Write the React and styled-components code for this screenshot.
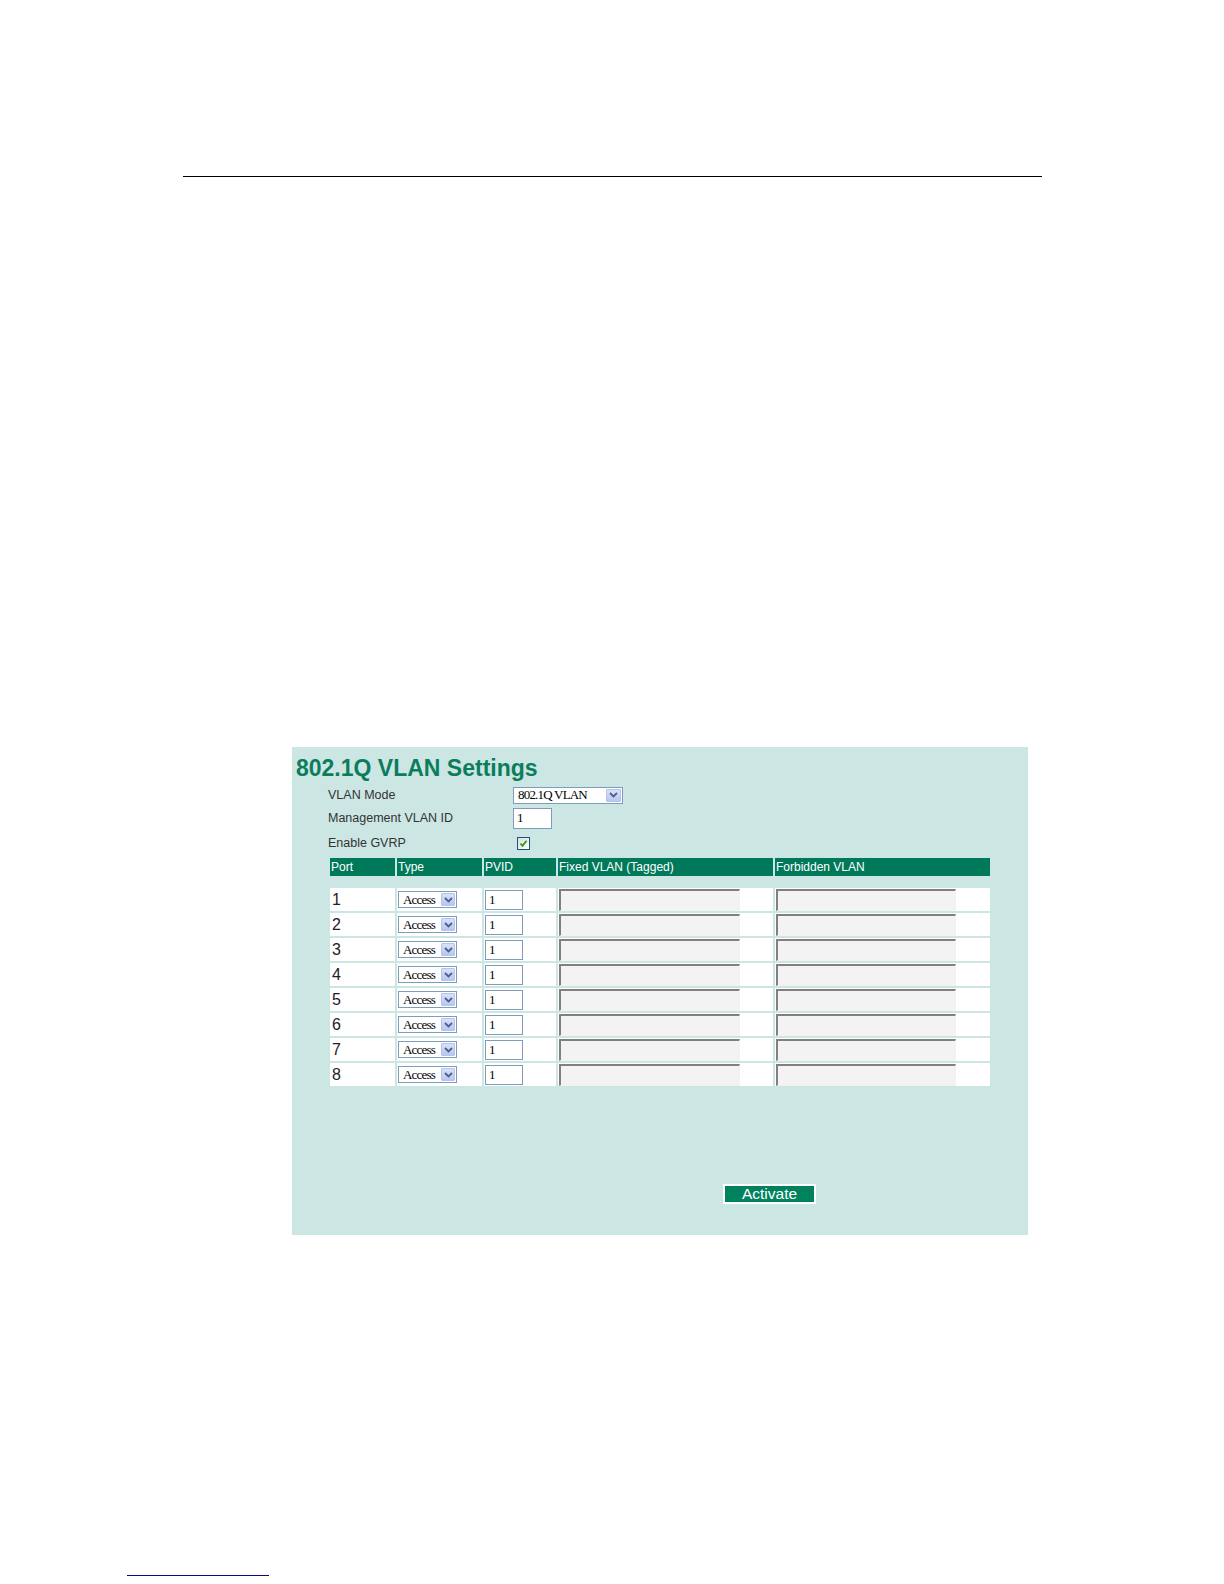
import React from "react";
import styled, { createGlobalStyle } from "styled-components";

const GlobalStyle = createGlobalStyle`
  body {
    margin: 0;
    background: #ffffff;
    font-family: "Liberation Sans", Arial, sans-serif;
  }
`;

const Page = styled.div`
  width: 1224px;
  min-height: 1584px;
  overflow: hidden;
`;

const Rule = styled.div`
  height: 1px;
  background: ${({ color }) => color || "#000"};
  width: ${({ width }) => width}px;
  margin-left: ${({ left }) => left}px;
  margin-top: ${({ top }) => top}px;
`;

const Panel = styled.div`
  box-sizing: border-box;
  width: 736px;
  height: 488px;
  margin-left: 292px;
  margin-top: 570px;
  background: #cce6e4;
  padding-top: 8px;
`;

const Title = styled.h1`
  margin: 0;
  padding-left: 4px;
  font-family: "Liberation Sans", Arial, sans-serif;
  font-size: 23px;
  line-height: 26px;
  font-weight: bold;
  color: #0b7d5c;
`;

const Form = styled.div`
  margin-top: 4px;
  margin-left: 36px;
  display: flex;
  flex-direction: column;
`;

const FormRow = styled.div`
  display: flex;
  align-items: center;
  height: ${({ h }) => h}px;
`;

const Label = styled.div`
  width: 185px;
  font-size: 12.5px;
  color: #333;
`;

const SelectBox = styled.div`
  box-sizing: border-box;
  display: flex;
  align-items: center;
  width: ${({ w }) => w}px;
  height: ${({ h }) => h}px;
  margin-left: ${({ ml }) => ml || 0}px;
  border: 1px solid #7f9db9;
  background: #fff;
  padding: 0 1px 0 4px;
`;

const SelectText = styled.span`
  flex: 1;
  font-family: "Liberation Serif", "Times New Roman", serif;
  font-size: 13px;
  letter-spacing: -0.8px;
  color: #000;
  white-space: nowrap;
`;

const ArrowBtn = styled.span`
  box-sizing: border-box;
  display: flex;
  align-items: center;
  justify-content: center;
  width: ${({ w }) => w}px;
  height: calc(100% - 2px);
  background: linear-gradient(#d9e1f8, #b8c7f0);
  border: 1px solid #b3c3ee;
  border-radius: 1px;
`;

const TextInput = styled.input`
  box-sizing: border-box;
  width: ${({ w }) => w}px;
  height: ${({ h }) => h}px;
  margin: 0 0 0 ${({ ml }) => ml || 0}px;
  padding: 0 0 0 3px;
  border: 1px solid #7f9db9;
  background: #fff;
  font-family: "Liberation Serif", "Times New Roman", serif;
  font-size: 13px;
  color: #000;
  outline: none;
`;

const DisabledInput = styled.input`
  box-sizing: border-box;
  width: ${({ w }) => w}px;
  height: 22px;
  margin: 0 0 0 1px;
  padding: 0;
  border-style: solid;
  border-width: 2px 1px 1px 2px;
  border-color: #808080 #f2f2f2 #f2f2f2 #808080;
  background: #f3f3f3;
  outline: none;
`;

const Check = styled.span`
  box-sizing: border-box;
  display: flex;
  align-items: center;
  justify-content: center;
  width: 13px;
  height: 13px;
  margin-left: 4px;
  border: 1px solid #1c5180;
  background: linear-gradient(135deg, #dcdcd7, #ffffff);
`;

const Table = styled.div`
  margin-top: 3px;
  margin-left: 38px;
  display: flex;
  flex-direction: column;
  row-gap: 2px;
`;

const Row = styled.div`
  display: grid;
  grid-template-columns: 65px 85px 72px 215px 215px;
  column-gap: 2px;
  height: ${({ head }) => (head ? 18 : 23)}px;
  margin-bottom: ${({ head }) => (head ? 10 : 0)}px;
`;

const HeadCell = styled.div`
  background: #00795a;
  color: #fff;
  font-size: 12px;
  line-height: 18px;
  padding-left: 1px;
  white-space: nowrap;
`;

const Cell = styled.div`
  display: flex;
  align-items: center;
  background: #fff;
  padding-left: ${({ pl }) => pl || 0}px;
  font-size: 16px;
  color: #222;
`;

const ActivateButton = styled.button`
  box-sizing: border-box;
  display: block;
  width: 93px;
  height: 20px;
  margin: 98px 0 0 431px;
  padding: 0;
  border: 2px solid #fff;
  background: #00825f;
  color: #fff;
  font-family: "Liberation Sans", Arial, sans-serif;
  font-size: 15.5px;
  line-height: 16px;
  cursor: pointer;
`;

const Chevron = () => (
  <svg width="9" height="6" viewBox="0 0 9 6">
    <path d="M1 1 L4.5 4.5 L8 1" fill="none" stroke="#4d5f8a" strokeWidth="1.8" />
  </svg>
);

const ports = [1, 2, 3, 4, 5, 6, 7, 8];

export default function App() {
  return (
    <Page>
      <GlobalStyle />
      <Rule top={176} left={183} width={859} />
      <Panel>
        <Title>802.1Q VLAN Settings</Title>
        <Form>
          <FormRow h={20}>
            <Label>VLAN Mode</Label>
            <SelectBox w={110} h={17}>
              <SelectText>802.1Q VLAN</SelectText>
              <ArrowBtn w={15}>
                <Chevron />
              </ArrowBtn>
            </SelectBox>
          </FormRow>
          <FormRow h={26}>
            <Label>Management VLAN ID</Label>
            <TextInput w={39} h={21} defaultValue="1" />
          </FormRow>
          <FormRow h={24}>
            <Label>Enable GVRP</Label>
            <Check>
              <svg width="9" height="9" viewBox="0 0 9 9">
                <path d="M1.5 4.5 L3.5 6.8 L7.6 1.8" fill="none" stroke="#21a121" strokeWidth="1.8" />
              </svg>
            </Check>
          </FormRow>
        </Form>
        <Table>
          <Row head>
            <HeadCell>Port</HeadCell>
            <HeadCell>Type</HeadCell>
            <HeadCell>PVID</HeadCell>
            <HeadCell>Fixed VLAN (Tagged)</HeadCell>
            <HeadCell>Forbidden VLAN</HeadCell>
          </Row>
          {ports.map((p) => (
            <Row key={p}>
              <Cell pl={2}>{p}</Cell>
              <Cell>
                <SelectBox w={59} h={17} ml={1}>
                  <SelectText>Access</SelectText>
                  <ArrowBtn w={14}>
                    <Chevron />
                  </ArrowBtn>
                </SelectBox>
              </Cell>
              <Cell>
                <TextInput w={38} h={20} ml={1} defaultValue="1" />
              </Cell>
              <Cell>
                <DisabledInput w={181} disabled />
              </Cell>
              <Cell>
                <DisabledInput w={180} disabled />
              </Cell>
            </Row>
          ))}
        </Table>
        <ActivateButton>Activate</ActivateButton>
      </Panel>
      <Rule top={340} left={127} width={142} color="#0a0a80" />
    </Page>
  );
}
